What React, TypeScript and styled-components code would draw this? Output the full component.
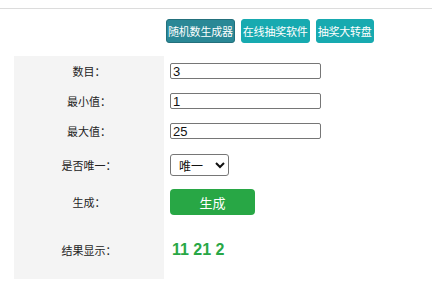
import React from 'react'
import styled, { createGlobalStyle } from 'styled-components'

const GlobalStyle = createGlobalStyle`
  body {
    margin: 0;
    background: #fff;
    font-family: 'Liberation Sans', 'Noto Sans CJK SC', sans-serif;
    color: #222;
  }
`

const Page = styled.div`
  width: 432px;
  height: 308px;
  border-top: 1px solid #dcdcdc;
  margin-top: 8px;
  box-sizing: border-box;
`

const NavBar = styled.div`
  display: flex;
  gap: 6px;
  padding: 10px 0 0 166px;
  height: 24px;
`

const NavButton = styled.a<{ $active?: boolean }>`
  display: flex;
  align-items: center;
  justify-content: center;
  height: 24px;
  padding: 0 1px;
  box-sizing: border-box;
  border-radius: 3px;
  font-size: 11px;
  letter-spacing: -0.2px;
  color: #fff;
  background: ${(p) => (p.$active ? '#2a8896' : '#17aab0')};
  border: 1px solid ${(p) => (p.$active ? '#23707c' : '#17aab0')};
  font-family: 'Noto Sans CJK SC', sans-serif;
  text-decoration: none;
  white-space: nowrap;
`

const Form = styled.div`
  display: grid;
  grid-template-columns: 150px 1fr;
  grid-template-rows: 30px 30px 30px 38px 36px 59px;
  margin: 13px 0 0 14px;
`

const Label = styled.div`
  display: flex;
  align-items: center;
  justify-content: center;
  background: #f4f4f4;
  font-size: 11px;
  font-family: 'Noto Sans CJK SC', sans-serif;
  color: #222;
`

const Field = styled.div`
  display: flex;
  align-items: center;
  padding-left: 6px;
`

const Input = styled.input`
  width: 151px;
  height: 16px;
  box-sizing: border-box;
  border: 1px solid #767676;
  border-radius: 2px;
  padding: 0 2px;
  font-size: 13px;
  font-family: 'Liberation Sans', sans-serif;
  color: #111;
  outline: none;
`

const Select = styled.select`
  width: 59px;
  height: 22px;
  font-size: 12px;
  font-family: 'Noto Sans CJK SC', sans-serif;
  border: 1px solid #767676;
  border-radius: 3px;
  background: #fff;
  color: #111;
  padding-left: 4px;
`

const GenerateButton = styled.button`
  width: 85px;
  height: 26px;
  border: none;
  border-radius: 4px;
  background: #28a745;
  color: #fff;
  font-size: 13px;
  font-family: 'Noto Sans CJK SC', sans-serif;
  cursor: pointer;
`

const Result = styled.span`
  font-size: 16px;
  font-weight: bold;
  color: #28a745;
  font-family: 'Liberation Sans', sans-serif;
  padding-left: 2px;
`

const App = () => {
  const [count, setCount] = React.useState('3')
  const [min, setMin] = React.useState('1')
  const [max, setMax] = React.useState('25')
  const [unique, setUnique] = React.useState('1')
  const [result, setResult] = React.useState('11 21 2')

  const generate = () => {
    const n = parseInt(count) || 0
    const lo = parseInt(min) || 0
    const hi = parseInt(max) || 0
    const out: number[] = []
    let guard = 0
    while (out.length < n && guard < 10000) {
      guard++
      const v = lo + Math.floor(Math.random() * (hi - lo + 1))
      if (unique === '1' && out.includes(v)) continue
      out.push(v)
    }
    setResult(out.join(' '))
  }

  return (
    <>
      <GlobalStyle />
      <Page>
        <NavBar>
          <NavButton $active>随机数生成器</NavButton>
          <NavButton>在线抽奖软件</NavButton>
          <NavButton>抽奖大转盘</NavButton>
        </NavBar>
        <Form>
          <Label>数目：</Label>
          <Field>
            <Input value={count} onChange={(e) => setCount(e.target.value)} />
          </Field>
          <Label>最小值：</Label>
          <Field>
            <Input value={min} onChange={(e) => setMin(e.target.value)} />
          </Field>
          <Label>最大值：</Label>
          <Field>
            <Input value={max} onChange={(e) => setMax(e.target.value)} />
          </Field>
          <Label>是否唯一：</Label>
          <Field>
            <Select value={unique} onChange={(e) => setUnique(e.target.value)}>
              <option value="1">唯一</option>
              <option value="0">不唯一</option>
            </Select>
          </Field>
          <Label>生成：</Label>
          <Field>
            <GenerateButton onClick={generate}>生成</GenerateButton>
          </Field>
          <Label>结果显示：</Label>
          <Field>
            <Result>{result}</Result>
          </Field>
        </Form>
      </Page>
    </>
  )
}

export default App
